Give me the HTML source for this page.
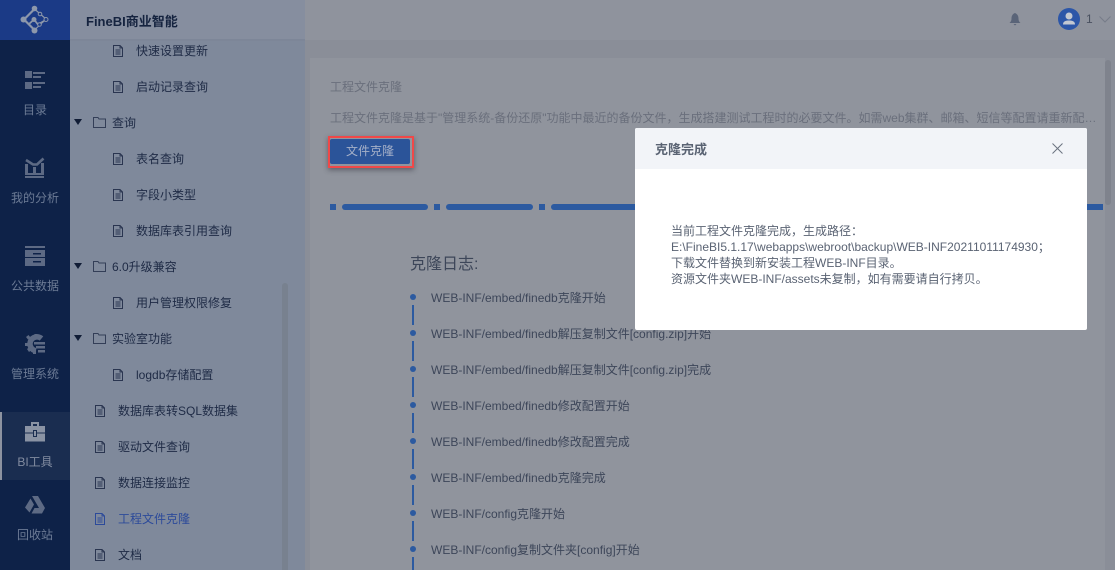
<!DOCTYPE html>
<html><head><meta charset="utf-8">
<style>
html,body{margin:0;padding:0;width:1115px;height:570px;overflow:hidden;background:#8a8e98}
*{box-sizing:border-box}
body{font-family:"Liberation Sans","Noto Sans CJK SC",sans-serif;font-size:12px;position:relative}
.a{position:absolute;white-space:nowrap}
.t{position:absolute;white-space:nowrap;line-height:16px;color:#1e2a45}
.n{position:absolute;left:0;width:70px;text-align:center;color:#6c7b95;line-height:16px}
.l{position:absolute;white-space:nowrap;left:431px;line-height:16px;color:#3d4659}
.d{position:absolute;left:410px;width:6px;height:6px;border-radius:50%;background:#2c5aa0}
.v{position:absolute;left:412px;width:2px;height:20px;background:#2c5aa0}
svg{position:absolute;overflow:visible}
</style></head><body>
<svg width="0" height="0" style="position:absolute"><defs>
<symbol id="f" viewBox="0 0 12 12"><path d="M1.5.5H8L10.5 3V11.5H1.5ZM8 .5V3H10.5M3.5 5H8.5M3.5 7H8.5M3.5 9H8.5" fill="none" stroke="#2a3550" stroke-width="1"/></symbol>
<symbol id="fb" viewBox="0 0 12 12"><path d="M1.5.5H8L10.5 3V11.5H1.5ZM8 .5V3H10.5M3.5 5H8.5M3.5 7H8.5M3.5 9H8.5" fill="none" stroke="#2c4a9a" stroke-width="1"/></symbol>
<symbol id="o" viewBox="0 0 13 11"><path d="M.5 10.5V.5H5L6 2H12.5V10.5Z" fill="none" stroke="#333e57" stroke-width="1"/></symbol>
</defs></svg>

<!-- left nav -->
<div class="a" style="left:0;top:0;width:70px;height:570px;background:#0e2248"></div>
<div class="a" style="left:0;top:0;width:70px;height:40px;background:#1b3a86"></div>
<svg style="left:20px;top:6px" width="30" height="28" viewBox="0 0 30 28" fill="none">
<path d="M4 13.500L14.500 3M4 13.500L14.500 24" stroke="#8d97ab" stroke-width="2.200"/>
<path d="M14.500 3L26 13L14.500 24" stroke="#8d97ab" stroke-width="1.200"/>
<path d="M9 18L14 13.500L18 18.500L24 15" stroke="#8d97ab" stroke-width="1.800"/>
<circle cx="14.500" cy="2.500" r="2.800" fill="#8d97ab"/><circle cx="3.500" cy="13.500" r="3" fill="#8d97ab"/><circle cx="14.500" cy="24.500" r="3" fill="#8d97ab"/>
<circle cx="14" cy="13.500" r="2.500" fill="#8d97ab"/><circle cx="20" cy="8" r="1.800" fill="#1b3a86" stroke="#8d97ab"/><circle cx="26" cy="13.500" r="2" fill="#1b3a86" stroke="#8d97ab"/><circle cx="19.500" cy="18.500" r="1.800" fill="#1b3a86" stroke="#8d97ab"/>
</svg>
<div class="a" style="left:0;top:412px;width:70px;height:68px;background:#1a2d50"></div>
<div class="a" style="left:0;top:412px;width:2px;height:68px;background:#8d93a0"></div>

<svg style="left:25px;top:71px" width="20" height="18" viewBox="0 0 20 18" fill="#5d6a84"><rect x="0" y="0" width="7" height="7"/><rect x="0" y="11" width="7" height="7"/><rect x="8" y="1" width="12" height="2"/><rect x="8" y="5" width="8" height="2"/><rect x="8" y="11" width="12" height="2"/><rect x="8" y="15" width="8" height="2"/></svg>
<div class="n" style="top:102px">目录</div>
<svg style="left:25px;top:158px" width="20" height="20" viewBox="0 0 20 20"><path d="M1 2L8 6.500H12L18.500 .5" fill="none" stroke="#5d6a84" stroke-width="2.600"/><path d="M0 6H3V15H0ZM8 9H11V15H8ZM16 5H19V15H16ZM0 15H19V17H0ZM0 18H19V20H0Z" fill="#5d6a84"/></svg>
<div class="n" style="top:190px">我的分析</div>
<svg style="left:25px;top:246px" width="20" height="20" viewBox="0 0 20 20" fill="#5d6a84"><rect width="20" height="2"/><rect y="4" width="20" height="7"/><rect y="12" width="20" height="8"/><rect x="8" y="7" width="8" height="1.500" fill="#0e2248"/><rect x="8" y="15" width="8" height="1.500" fill="#0e2248"/></svg>
<div class="n" style="top:278px">公共数据</div>
<svg style="left:25px;top:334px" width="20" height="20" viewBox="0 0 20 20" fill="none"><path d="M16.500 4.500A7 7 0 1 0 11 16.800" stroke="#5d6a84" stroke-width="5.500"/><path d="M9.500 0H12.500V3H9.500ZM1 3L3.500 1L5.500 3.500L3 5.500ZM0 9H3V12H0ZM2 15L4.500 13L6.500 16L4 18ZM8 17H11V20H8Z" fill="#5d6a84"/><path d="M9 8H20V10.500H9ZM11 12H20V14.500H11ZM13 16H20V18.500H13Z" fill="#5d6a84"/></svg>
<div class="n" style="top:366px">管理系统</div>
<svg style="left:25px;top:422px" width="20" height="20" viewBox="0 0 20 20" fill="#8a93a4"><path d="M6 4V0H14V4H12V2H8V4Z"/><rect y="4" width="20" height="6.500"/><rect y="11.500" width="20" height="8"/><rect x="8" y="8" width="4" height="7" fill="#1a2d50"/><rect x="9" y="9" width="2" height="5"/></svg>
<div class="n" style="top:454px;color:#828ca0">BI工具</div>
<svg style="left:25px;top:495px" width="20" height="20" viewBox="0 0 20 20" fill="#5d6a84"><path d="M7 1H13L20 13H14ZM5.500 3.500L9 9.500L4.500 17.500L0 12.500ZM6.500 18.500L9.500 13H20L17 18.500Z"/></svg>
<div class="n" style="top:527px">回收站</div>

<!-- tree -->
<div class="a" style="left:70px;top:40px;width:235px;height:530px;background:#7f899b"></div>
<div class="a" style="left:70px;top:0;width:235px;height:40px;background:#868e9f"></div>
<div class="a" style="left:70px;top:39px;width:235px;height:2px;background:#7d8698"></div>
<div class="t" style="left:86px;top:14px;font-size:13px;font-weight:bold;color:#15233f">FineBI商业智能</div>
<div class="a" style="left:282px;top:283px;width:6px;height:287px;background:#78818f;border-radius:3px 3px 0 0"></div>
<div class="a" style="left:305px;top:0;width:810px;height:40px;background:#8f939d"></div>
<div class="a" style="left:305px;top:40px;width:810px;height:530px;background:#8a8e98"></div>
<div class="a" style="left:310px;top:58px;width:795px;height:512px;background:#90949d"></div>
<div class="a" style="left:1105px;top:60px;width:6px;height:145px;background:#7f838d;border-radius:3px"></div>

<svg style="left:112px;top:45px" width="12" height="12"><use href="#f"/></svg><div class="t" style="left:136px;top:43px">快速设置更新</div>
<svg style="left:112px;top:81px" width="12" height="12"><use href="#f"/></svg><div class="t" style="left:136px;top:79px">启动记录查询</div>
<svg style="left:74px;top:119px" width="8" height="6" viewBox="0 0 8 6"><path d="M0 0H8L4 6Z" fill="#101c35"/></svg>
<svg style="left:93px;top:117px" width="13" height="11"><use href="#o"/></svg><div class="t" style="left:112px;top:115px">查询</div>
<svg style="left:112px;top:153px" width="12" height="12"><use href="#f"/></svg><div class="t" style="left:136px;top:151px">表名查询</div>
<svg style="left:112px;top:189px" width="12" height="12"><use href="#f"/></svg><div class="t" style="left:136px;top:187px">字段小类型</div>
<svg style="left:112px;top:225px" width="12" height="12"><use href="#f"/></svg><div class="t" style="left:136px;top:223px">数据库表引用查询</div>
<svg style="left:74px;top:263px" width="8" height="6" viewBox="0 0 8 6"><path d="M0 0H8L4 6Z" fill="#101c35"/></svg>
<svg style="left:93px;top:261px" width="13" height="11"><use href="#o"/></svg><div class="t" style="left:112px;top:259px">6.0升级兼容</div>
<svg style="left:112px;top:297px" width="12" height="12"><use href="#f"/></svg><div class="t" style="left:136px;top:295px">用户管理权限修复</div>
<svg style="left:74px;top:335px" width="8" height="6" viewBox="0 0 8 6"><path d="M0 0H8L4 6Z" fill="#101c35"/></svg>
<svg style="left:93px;top:333px" width="13" height="11"><use href="#o"/></svg><div class="t" style="left:112px;top:331px">实验室功能</div>
<svg style="left:112px;top:369px" width="12" height="12"><use href="#f"/></svg><div class="t" style="left:136px;top:367px">logdb存储配置</div>
<svg style="left:94px;top:405px" width="12" height="12"><use href="#f"/></svg><div class="t" style="left:118px;top:403px">数据库表转SQL数据集</div>
<svg style="left:94px;top:441px" width="12" height="12"><use href="#f"/></svg><div class="t" style="left:118px;top:439px">驱动文件查询</div>
<svg style="left:94px;top:477px" width="12" height="12"><use href="#f"/></svg><div class="t" style="left:118px;top:475px">数据连接监控</div>
<svg style="left:94px;top:513px" width="12" height="12"><use href="#fb"/></svg><div class="t" style="left:118px;top:511px;color:#2c4a9a">工程文件克隆</div>
<svg style="left:94px;top:549px" width="12" height="12"><use href="#f"/></svg><div class="t" style="left:118px;top:547px">文档</div>

<!-- top right -->
<svg style="left:1009px;top:13px" width="12" height="13" viewBox="0 0 12 13" fill="#5a6478"><path d="M6 0C3.500 1 2.500 3 2.500 5.500C2.500 8 1.500 9 .5 10H11.500C10.500 9 9.500 8 9.500 5.500C9.500 3 8.500 1 6 0ZM4.500 11H7.500L6 12.500Z"/></svg>
<svg style="left:1058px;top:8px" width="22" height="22" viewBox="0 0 22 22"><circle cx="11" cy="11" r="11" fill="#2c56a8"/><circle cx="11" cy="8" r="3.500" fill="#c3c8d2"/><path d="M5 16.500C5 13 8 12.500 11 12.500C14 12.500 17 13 17 16.500Z" fill="#c3c8d2"/></svg>
<div class="t" style="left:1086px;top:11px;color:#4a5160">1</div>
<svg style="left:1099px;top:16px" width="12" height="7" viewBox="0 0 12 7"><path d="M.5.500L6 6L11.500.500" fill="none" stroke="#767c89" stroke-width="1"/></svg>

<!-- content -->
<div class="t" style="left:330px;top:79px;color:#6a6f7c">工程文件克隆</div>
<div class="t" style="left:330px;top:110px;color:#6a6f7c;width:768px;overflow:hidden;text-overflow:ellipsis">工程文件克隆是基于"管理系统-备份还原"功能中最近的备份文件，生成搭建测试工程时的必要文件。如需web集群、邮箱、短信等配置请重新配置。</div>
<div class="a" style="left:328px;top:136px;width:86px;height:32px;border:2px solid #f04848;box-shadow:0 2px 5px rgba(30,30,40,.45)"></div>
<div class="a" style="left:330px;top:139px;width:80px;height:25px;background:#2b5499;border-radius:2px;color:#a5b0c8;text-align:center;line-height:25px">文件克隆</div>

<div class="a" style="left:330px;top:204px;width:6px;height:6px;background:#2c5aa0"></div>
<div class="a" style="left:342px;top:204px;width:86px;height:6px;background:#2c5aa0;border-radius:3px"></div>
<div class="a" style="left:434px;top:204px;width:6px;height:6px;background:#2c5aa0"></div>
<div class="a" style="left:446px;top:204px;width:87px;height:6px;background:#2c5aa0;border-radius:3px"></div>
<div class="a" style="left:539px;top:204px;width:6px;height:6px;background:#2c5aa0"></div>
<div class="a" style="left:551px;top:204px;width:552px;height:6px;background:#2c5aa0;border-radius:3px 0 0 3px"></div>

<div class="a" style="left:410px;top:255px;font-size:16px;line-height:20px;color:#3d4659">克隆日志:</div>

<div class="d" style="top:294px"></div><div class="v" style="top:305px"></div><div class="l" style="top:290px">WEB-INF/embed/finedb克隆开始</div>
<div class="d" style="top:330px"></div><div class="v" style="top:341px"></div><div class="l" style="top:326px">WEB-INF/embed/finedb解压复制文件[config.zip]开始</div>
<div class="d" style="top:366px"></div><div class="v" style="top:377px"></div><div class="l" style="top:362px">WEB-INF/embed/finedb解压复制文件[config.zip]完成</div>
<div class="d" style="top:402px"></div><div class="v" style="top:413px"></div><div class="l" style="top:398px">WEB-INF/embed/finedb修改配置开始</div>
<div class="d" style="top:438px"></div><div class="v" style="top:449px"></div><div class="l" style="top:434px">WEB-INF/embed/finedb修改配置完成</div>
<div class="d" style="top:474px"></div><div class="v" style="top:485px"></div><div class="l" style="top:470px">WEB-INF/embed/finedb克隆完成</div>
<div class="d" style="top:510px"></div><div class="v" style="top:521px"></div><div class="l" style="top:506px">WEB-INF/config克隆开始</div>
<div class="d" style="top:546px"></div><div class="v" style="top:557px"></div><div class="l" style="top:542px">WEB-INF/config复制文件夹[config]开始</div>

<!-- dialog -->
<div class="a" style="left:635px;top:128px;width:452px;height:202px;background:#fff;border-radius:2px;overflow:hidden">
<div class="a" style="left:0;top:0;width:452px;height:41px;background:#f2f4f8"></div>
<div class="a" style="left:20px;top:14px;font-size:13px;font-weight:bold;line-height:16px;color:#5a6373">克隆完成</div>
<svg style="left:417px;top:15px" width="11" height="11" viewBox="0 0 11 11"><path d="M.5.500L10.500 10.500M10.500.500L.5 10.500" stroke="#6b7280" stroke-width="1" fill="none"/></svg>
<div class="a" style="left:36px;top:95px;line-height:16px;color:#5a6373">当前工程文件克隆完成，生成路径：<br>E:\FineBI5.1.17\webapps\webroot\backup\WEB-INF20211011174930；<br>下载文件替换到新安装工程WEB-INF目录。<br>资源文件夹WEB-INF/assets未复制，如有需要请自行拷贝。</div>
</div>
</body></html>
